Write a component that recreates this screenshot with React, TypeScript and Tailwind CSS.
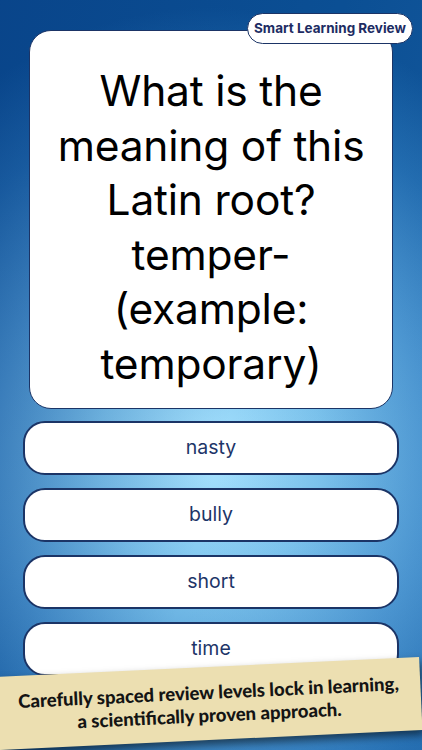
import React from "react";

const answers = ["nasty", "bully", "short", "time"];

export default function App() {
  return (
    <div
      className="relative w-[422px] h-[750px] overflow-hidden bg-[radial-gradient(ellipse_95%_60%_at_50%_61%,#a8e3ff_0%,#7cc3ec_28%,#4a94cf_55%,#1f69ad_80%,#0b4f94_100%)]"
      style={{ fontFamily: "Inter, 'Noto Sans', sans-serif" }}
    >
      <div className="absolute inset-0 bg-[linear-gradient(105deg,rgba(5,50,120,0.35)_0%,rgba(5,50,120,0)_55%,rgba(90,160,220,0.15)_100%)]" />
      <div className="relative flex flex-col pt-[30px]">
        <div className="mx-[29px] h-[379px] rounded-[22px] border-[1.5px] border-[#1b3466] bg-white pt-[33px]">
          <div className="text-center text-[42.5px] leading-[54.5px] text-black tracking-[-0.2px]">
            <div>What is the</div>
            <div>meaning of this</div>
            <div>Latin root?</div>
            <div>temper-</div>
            <div>(example:</div>
            <div>temporary)</div>
          </div>
        </div>
        <div className="mt-[12px] mx-[23px] flex flex-col gap-[13px]">
          {answers.map((a) => (
            <div
              key={a}
              className="h-[54px] rounded-[22px] border-[2px] border-[#1b3466] bg-white flex items-center justify-center text-[19.5px] text-[#1d3568]"
            >
              {a}
            </div>
          ))}
        </div>
      </div>

      <div className="absolute top-[13px] right-[9px] h-[31px] w-[166px] rounded-full border-[1.5px] border-[#1b3466] bg-white flex items-center justify-center text-[13.5px] font-bold text-[#1d2c63]">
        Smart Learning Review
      </div>

      <div
        className="absolute left-[-3px] top-[667px] w-[424px] h-[73px] rotate-[-2.7deg] bg-[#ecdfb1] shadow-[2px_5px_8px_rgba(0,0,0,0.55)] flex flex-col items-center justify-center text-[18.5px] leading-[23px] font-black text-[#141414]"
        style={{ fontFamily: "Lato, 'Open Sans', sans-serif" }}
      >
        <div>Carefully spaced review levels lock in learning,</div>
        <div>a scientifically proven approach.</div>
      </div>
    </div>
  );
}
